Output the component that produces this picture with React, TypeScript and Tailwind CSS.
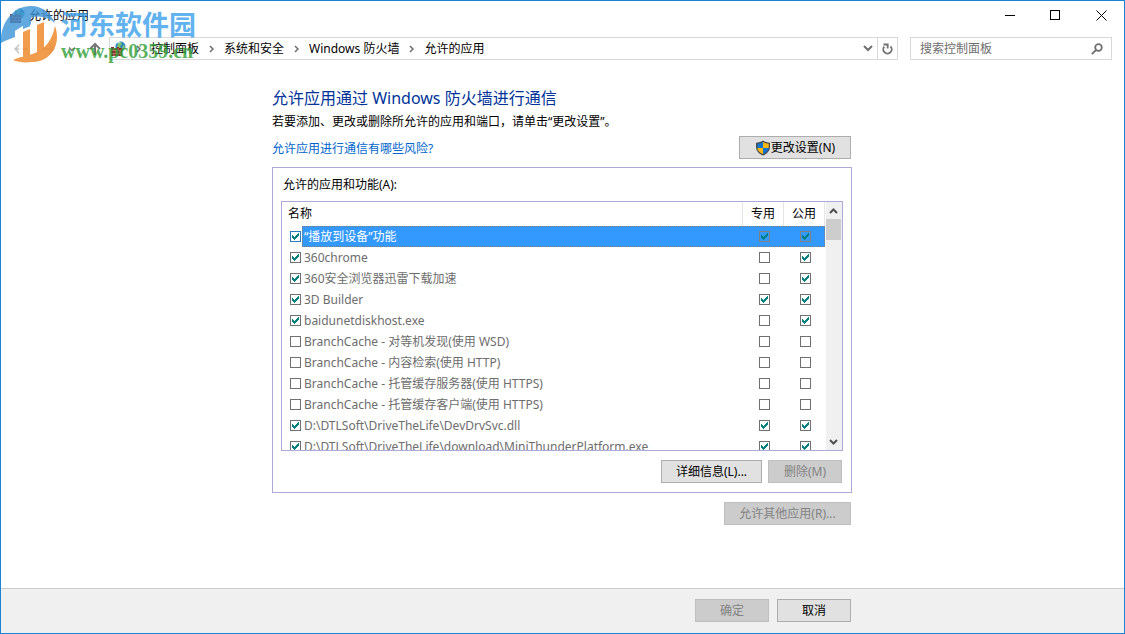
import { Fragment } from 'react'

interface AppRule {
  name: string
  enabled: boolean
  privateNet: boolean
  publicNet: boolean
}

const rules: AppRule[] = [
  { name: '“播放到设备”功能', enabled: true, privateNet: true, publicNet: true },
  { name: '360chrome', enabled: true, privateNet: false, publicNet: true },
  { name: '360安全浏览器迅雷下载加速', enabled: true, privateNet: false, publicNet: true },
  { name: '3D Builder', enabled: true, privateNet: true, publicNet: true },
  { name: 'baidunetdiskhost.exe', enabled: true, privateNet: false, publicNet: true },
  { name: 'BranchCache - 对等机发现(使用 WSD)', enabled: false, privateNet: false, publicNet: false },
  { name: 'BranchCache - 内容检索(使用 HTTP)', enabled: false, privateNet: false, publicNet: false },
  { name: 'BranchCache - 托管缓存服务器(使用 HTTPS)', enabled: false, privateNet: false, publicNet: false },
  { name: 'BranchCache - 托管缓存客户端(使用 HTTPS)', enabled: false, privateNet: false, publicNet: false },
  { name: 'D:\\DTLSoft\\DriveTheLife\\DevDrvSvc.dll', enabled: true, privateNet: true, publicNet: true },
  {
    name: 'D:\\DTLSoft\\DriveTheLife\\download\\MiniThunderPlatform.exe',
    enabled: true,
    privateNet: true,
    publicNet: true
  }
]

const crumbs = ['控制面板', '系统和安全', 'Windows 防火墙', '允许的应用']

const buttonStyle =
  'flex h-[23px] items-center justify-center border border-[#adadad] bg-[#e1e1e1] text-black disabled:border-[#bfbfbf] disabled:bg-[#cccccc] disabled:text-[#838383]'

function Check({ label, checked, className }: { label: string; checked: boolean; className: string }) {
  return (
    <span className="grid size-[11px] shrink-0">
      <input
        type="checkbox"
        aria-label={label}
        defaultChecked={checked}
        className={`peer col-start-1 row-start-1 size-[11px] appearance-none border ${className}`}
      />
      <svg
        viewBox="0 0 11 11"
        shapeRendering="crispEdges"
        className="pointer-events-none invisible col-start-1 row-start-1 size-[11px] peer-checked:visible"
      >
        <path
          d="M2 4h1v3h-1zM3 5h1v3h-1zM4 6h1v3h-1zM5 5h1v3h-1zM6 4h1v3h-1zM7 3h1v3h-1zM8 2h1v3h-1z"
          fill="#008080"
        />
      </svg>
    </span>
  )
}

function FirewallIcon() {
  return (
    <svg viewBox="0 0 16 16" className="size-4 shrink-0">
      <circle cx="10.500" cy="5.500" r="5" fill="#2b7fc4" />
      <path d="M8 2l3-1 1 2-2 2 1 2-2 2-2-3zM13 4l2 1-1 4-2-1z" fill="#7fc96b" />
      <path d="M7 2l3-1" stroke="#d8f0ff" />
      <path d="M1 6h3v1h3v-1h2v1h3v8H1z" fill="#8e2f28" />
      <path d="M1 9.500h11M1 12.500h11M4 7v2M8 7v2M6 10v2M10 10v2M4 13v2M8 13v2" stroke="#d39a8c" strokeWidth=".6" />
    </svg>
  )
}

function ShieldIcon() {
  return (
    <svg viewBox="0 0 16 16" className="size-4 shrink-0">
      <path d="M8 .5C6 2 3.500 2.600 1 2.700V7c0 4 3 6.800 7 8.600 4-1.800 7-4.600 7-8.600V2.700C12.500 2.600 10 2 8 .5z" fill="#4c4c4c" />
      <path d="M8 2C6.300 3 4.500 3.500 2.300 3.700V8H8z" fill="#0f73d0" />
      <path d="M8 2c1.700 1 3.500 1.500 5.700 1.700V8H8z" fill="#fdb813" />
      <path d="M2.300 8H8v6.300C4.800 12.700 2.500 10.700 2.300 8z" fill="#fdb813" />
      <path d="M13.700 8H8v6.300c3.200-1.600 5.500-3.600 5.700-6.300z" fill="#0f73d0" />
    </svg>
  )
}

function Watermark() {
  return (
    <div className="pointer-events-none absolute top-0 left-0 flex items-start opacity-80">
      <svg viewBox="0 0 60 66" className="h-[66px] w-[60px] shrink-0">
        {/* blue upper crescent */}
        <path d="M0 42C-1 22 12 5 30 5 41 5 50 12 54 22 47 16 37 14 30 17V25L22 28V25L14 30V36C9 38 3 40 0 42z" fill="#3a94d8" />
        {/* orange lower crescent, merging into the right bar */}
        <path d="M12 59C20 55 27 55 34 52 45 47 51 39 54 25 61 44 49 61 31 61 23 62 17 61 12 59z" fill="#ee8420" />
        <path d="M22 31l7-3v31h-7zM36 24l7-3v29l-7 4z" fill="#ee8420" />
        <path d="M14 30l8-5v31h-4V33l-4 2z" fill="#fff" />
        <path d="M29 24l7-4v31h-4V27l-3 2z" fill="#fff" />
      </svg>
      <div className="flex flex-col pt-2">
        <span className="text-[27px] leading-8 font-bold text-[#3a9fea]">河东软件园</span>
        <span className="font-['Liberation_Serif',serif] text-[20px] leading-5 font-bold text-[#2f9e35]">
          www.pc0359.cn
        </span>
      </div>
    </div>
  )
}

function TitleBar() {
  return (
    <header className="flex h-9 items-start justify-between">
      <div className="flex h-[29px] items-center gap-1 pl-2">
        <FirewallIcon />
        <span>允许的应用</span>
      </div>
      <div className="flex">
        <button type="button" aria-label="最小化" className="flex h-7 w-[45px] items-center justify-center">
          <svg viewBox="0 0 11 11" className="size-[11px]" shapeRendering="crispEdges">
            <path d="M0 5.500h10" stroke="#000" />
          </svg>
        </button>
        <button type="button" aria-label="最大化" className="flex h-7 w-[45px] items-center justify-center">
          <svg viewBox="0 0 11 11" className="size-[11px]" shapeRendering="crispEdges">
            <path d="M.5 .5h9v9h-9z" fill="none" stroke="#000" />
          </svg>
        </button>
        <button type="button" aria-label="关闭" className="flex h-7 w-[46px] items-center justify-center">
          <svg viewBox="0 0 11 11" className="size-[11px]">
            <path d="M.5 .5l10 10M10.500 .5l-10 10" stroke="#000" />
          </svg>
        </button>
      </div>
    </header>
  )
}

function NavBar() {
  return (
    <nav className="flex items-center pr-3">
      <div className="flex w-[108px] items-center gap-[13px] pl-[13px]">
        <button type="button" aria-label="后退">
          <svg viewBox="0 0 14 12" className="h-3 w-3.5" fill="none" stroke="#c4c4c4" strokeWidth="1.500">
            <path d="M13 6H1M6 1L1 6l5 5" />
          </svg>
        </button>
        <button type="button" aria-label="前进">
          <svg viewBox="0 0 14 12" className="h-3 w-3.5" fill="none" stroke="#d4d4d4" strokeWidth="1.500">
            <path d="M1 6h12M8 1l5 5-5 5" />
          </svg>
        </button>
        <button type="button" aria-label="最近浏览的位置">
          <svg viewBox="0 0 8 8" className="size-2" fill="none" stroke="#777" strokeWidth="1.500">
            <path d="M1 2.500l3 3 3-3" />
          </svg>
        </button>
        <button type="button" aria-label="上移">
          <svg viewBox="0 0 12 14" className="h-3.5 w-3" fill="none" stroke="#777" strokeWidth="2">
            <path d="M6 13V2M1 7l5-5 5 5" />
          </svg>
        </button>
      </div>
      <div className="flex h-[23px] flex-1 items-center border border-[#d9d9d9]">
        <div className="flex flex-1 items-center">
          <FirewallIcon />
          {crumbs.map((crumb) => (
            <Fragment key={crumb}>
              <svg viewBox="0 0 5 8" className="mx-2.5 h-2 w-[5px]" fill="none" stroke="#6d6d6d" strokeWidth="1.500">
                <path d="M1 1l3 3-3 3" />
              </svg>
              <a href="#">{crumb}</a>
            </Fragment>
          ))}
        </div>
        <button type="button" aria-label="以前的位置" className="flex w-[19px] items-center justify-center">
          <svg viewBox="0 0 10 7" className="h-[7px] w-2.5" fill="none" stroke="#707070" strokeWidth="2">
            <path d="M1 1l4 4 4-4" />
          </svg>
        </button>
        <button
          type="button"
          aria-label="刷新"
          className="flex h-[21px] w-5 items-center justify-center border-l border-[#d9d9d9]"
        >
          <svg viewBox="0 0 11 12" className="h-3 w-[11px]" fill="none" stroke="#707070" strokeWidth="1.800">
            <path d="M2.300 3.600A4.200 4.200 0 1 0 8.500 3.400" />
            <path d="M1.500 1.500h4.200v4" />
          </svg>
        </button>
      </div>
      <div className="ml-3 flex h-[23px] w-[202px] items-center border border-[#d9d9d9] pr-2 pl-[9px]">
        <input
          type="text"
          aria-label="搜索控制面板"
          placeholder="搜索控制面板"
          className="min-w-0 flex-1 placeholder:text-[#6d6d6d]"
        />
        <svg viewBox="0 0 12 12" className="size-3" fill="none" stroke="#707070" strokeWidth="1.800">
          <circle cx="7.500" cy="4.500" r="3.300" />
          <path d="M5 7L.8 11.200" />
        </svg>
      </div>
    </nav>
  )
}

function RuleRow({ rule, selected }: { rule: AppRule; selected: boolean }) {
  const band = selected ? 'border-y border-dotted border-[#80807f] bg-[#3399ff] text-white' : 'text-[#6d6d6d]'
  const netBox = selected ? 'border-[#808080] bg-[#3399ff]' : 'border-[#707070] bg-white'

  return (
    <tr>
      <td className="p-0">
        <div className="flex h-[21px] items-center gap-px pl-2">
          <Check
            label={rule.name}
            checked={rule.enabled}
            className={selected ? 'border-[#2a7ac0] bg-white' : 'border-[#707070] bg-white'}
          />
          <span className={`flex h-[21px] flex-1 items-center whitespace-nowrap ${band} ${selected ? 'border-l pl-px' : 'pl-0.5'}`}>
            {rule.name}
          </span>
        </div>
      </td>
      <td className="p-0">
        <div className={`flex h-[21px] items-center justify-center pl-0.5 ${band}`}>
          <Check label={`${rule.name} 专用`} checked={rule.privateNet} className={netBox} />
        </div>
      </td>
      <td className="p-0">
        <div className={`flex h-[21px] items-center justify-center ${band} ${selected ? 'border-r pl-[3px]' : 'pl-0.5'}`}>
          <Check label={`${rule.name} 公用`} checked={rule.publicNet} className={netBox} />
        </div>
      </td>
    </tr>
  )
}

function ScrollBar() {
  return (
    <div className="ml-px flex w-4 flex-col items-center justify-between bg-[#f0f0f0] pr-px">
      <div className="flex w-full flex-col items-center">
        <button type="button" aria-label="向上滚动" className="flex h-[17px] items-center">
          <svg viewBox="0 0 9 6" className="h-1.5 w-[9px]" fill="none" stroke="#505050" strokeWidth="2">
            <path d="M1 5l3.500-3.500L8 5" />
          </svg>
        </button>
        <div className="h-[21px] w-[15px] bg-[#cdcdcd]" />
      </div>
      <button type="button" aria-label="向下滚动" className="flex h-[17px] items-center">
        <svg viewBox="0 0 9 6" className="h-1.5 w-[9px]" fill="none" stroke="#505050" strokeWidth="2">
          <path d="M1 1l3.500 3.500L8 1" />
        </svg>
      </button>
    </div>
  )
}

export default function App() {
  return (
    <div className="relative flex min-h-screen flex-col border border-[#1883d7] bg-white font-['Noto_Sans','Noto_Sans_CJK_SC',sans-serif] text-xs text-black">
      <TitleBar />
      <NavBar />

      <main className="mx-auto flex w-[581px] flex-1 flex-col pt-7 pr-px pb-8">
        <h1 className="text-base leading-5 text-[#003399]">允许应用通过 Windows 防火墙进行通信</h1>
        <p className="mt-1 leading-5">若要添加、更改或删除所允许的应用和端口，请单击“更改设置”。</p>
        <div className="mt-1 flex items-center justify-between pr-px">
          <a href="#" className="pt-0.5 text-[#0066cc]">
            允许应用进行通信有哪些风险?
          </a>
          <button type="button" className={`${buttonStyle} w-28`}>
            <ShieldIcon />
            更改设置(N)
          </button>
        </div>

        <section className="mt-2 border border-[#acaadb] px-2 pt-2 pb-[9px]">
          <h2 id="rules-label" className="pl-0.5 leading-[18px]">
            允许的应用和功能(A):
          </h2>
          <div className="mt-[7px] flex h-[250px] overflow-hidden border border-[#acaadb]">
            <div className="flex-1 overflow-hidden">
              <table aria-labelledby="rules-label" className="w-full table-fixed border-separate border-spacing-0">
                <thead>
                  <tr className="h-6">
                    <th className="border-r border-[#e5e5e5] p-0 pl-1.5 text-left font-normal">名称</th>
                    <th className="w-[41px] border-r border-[#e5e5e5] p-0 font-normal">专用</th>
                    <th className="w-[41px] border-r border-[#e5e5e5] p-0 font-normal">公用</th>
                  </tr>
                </thead>
                <tbody>
                  {rules.map((rule, i) => (
                    <RuleRow key={rule.name} rule={rule} selected={i === 0} />
                  ))}
                </tbody>
              </table>
            </div>
            <ScrollBar />
          </div>
          <div className="mt-[9px] flex justify-end gap-1.5 pr-px">
            <button type="button" className={`${buttonStyle} w-[101px]`}>
              详细信息(L)...
            </button>
            <button type="button" disabled className={`${buttonStyle} w-[74px]`}>
              删除(M)
            </button>
          </div>
        </section>

        <div className="mt-[9px] flex justify-end pr-px">
          <button type="button" disabled className={`${buttonStyle} w-[127px]`}>
            允许其他应用(R)...
          </button>
        </div>
      </main>

      <footer className="border-t border-[#cccccc] bg-[#f0f0f0] pt-2.5 pb-[11px]">
        <div className="mx-auto flex w-[581px] justify-end gap-2 pr-0.5">
          <button type="button" disabled className={`${buttonStyle} w-[74px]`}>
            确定
          </button>
          <button type="button" className={`${buttonStyle} w-[74px]`}>
            取消
          </button>
        </div>
      </footer>

      <Watermark />
    </div>
  )
}
